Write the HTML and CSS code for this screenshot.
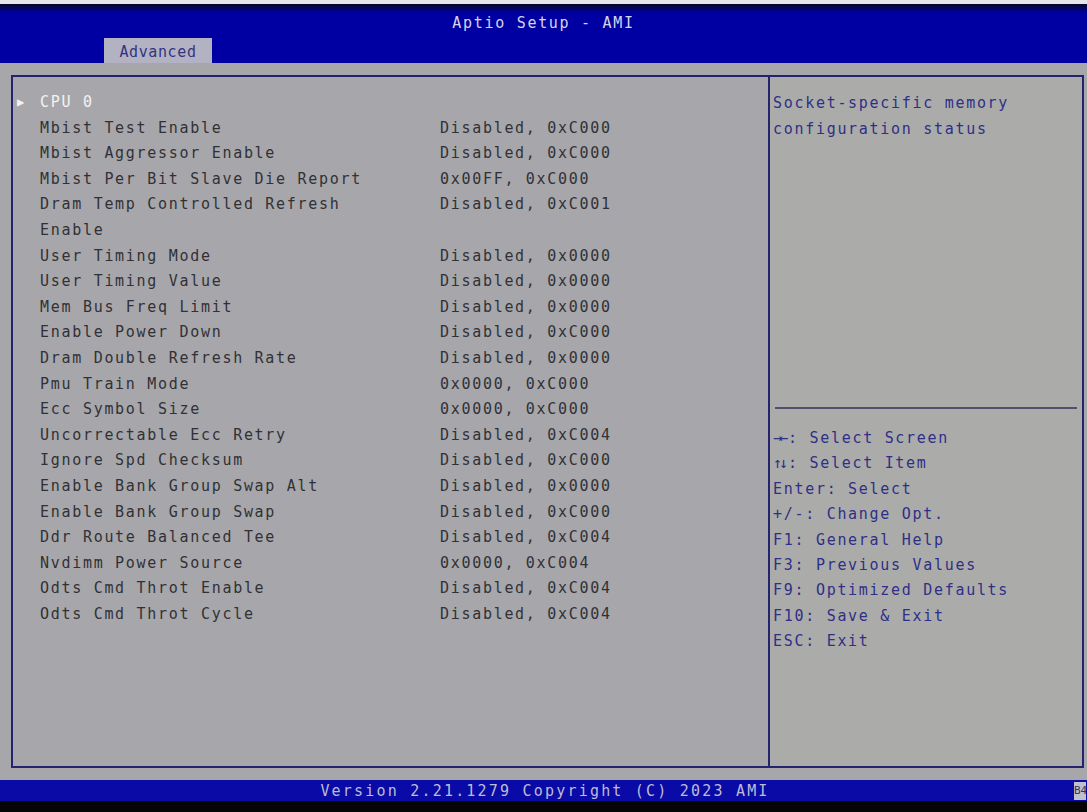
FILE: index.html
```html
<!DOCTYPE html>
<html lang="en">
<head>
  <meta charset="UTF-8" />
  <title>Aptio Setup - AMI</title>
  <link rel="stylesheet" href="styles.css">
</head>
<body>
  <header class="topbar">
    <div class="title">Aptio Setup - AMI</div>
    <nav class="tabs">
      <span class="tab">Advanced</span>
    </nav>
  </header>

  <main class="main">
    <div class="frame">
      <section class="settings">
        <div class="row submenu"><span class="arrow">&#9654;</span><span class="label">CPU 0</span><span class="value"></span></div>
        <div class="row"><span class="label">Mbist Test Enable</span><span class="value">Disabled, 0xC000</span></div>
        <div class="row"><span class="label">Mbist Aggressor Enable</span><span class="value">Disabled, 0xC000</span></div>
        <div class="row"><span class="label">Mbist Per Bit Slave Die Report</span><span class="value">0x00FF, 0xC000</span></div>
        <div class="row"><span class="label">Dram Temp Controlled Refresh Enable</span><span class="value">Disabled, 0xC001</span></div>
        <div class="row"><span class="label">User Timing Mode</span><span class="value">Disabled, 0x0000</span></div>
        <div class="row"><span class="label">User Timing Value</span><span class="value">Disabled, 0x0000</span></div>
        <div class="row"><span class="label">Mem Bus Freq Limit</span><span class="value">Disabled, 0x0000</span></div>
        <div class="row"><span class="label">Enable Power Down</span><span class="value">Disabled, 0xC000</span></div>
        <div class="row"><span class="label">Dram Double Refresh Rate</span><span class="value">Disabled, 0x0000</span></div>
        <div class="row"><span class="label">Pmu Train Mode</span><span class="value">0x0000, 0xC000</span></div>
        <div class="row"><span class="label">Ecc Symbol Size</span><span class="value">0x0000, 0xC000</span></div>
        <div class="row"><span class="label">Uncorrectable Ecc Retry</span><span class="value">Disabled, 0xC004</span></div>
        <div class="row"><span class="label">Ignore Spd Checksum</span><span class="value">Disabled, 0xC000</span></div>
        <div class="row"><span class="label">Enable Bank Group Swap Alt</span><span class="value">Disabled, 0x0000</span></div>
        <div class="row"><span class="label">Enable Bank Group Swap</span><span class="value">Disabled, 0xC000</span></div>
        <div class="row"><span class="label">Ddr Route Balanced Tee</span><span class="value">Disabled, 0xC004</span></div>
        <div class="row"><span class="label">Nvdimm Power Source</span><span class="value">0x0000, 0xC004</span></div>
        <div class="row"><span class="label">Odts Cmd Throt Enable</span><span class="value">Disabled, 0xC004</span></div>
        <div class="row"><span class="label">Odts Cmd Throt Cycle</span><span class="value">Disabled, 0xC004</span></div>
      </section>

      <aside class="side">
        <div class="help">Socket-specific memory configuration status</div>
        <hr class="divider">
        <ul class="keys">
          <li><span class="key">&rarr;&larr;</span>: Select Screen</li>
          <li><span class="key">&uarr;&darr;</span>: Select Item</li>
          <li>Enter: Select</li>
          <li>+/-: Change Opt.</li>
          <li>F1: General Help</li>
          <li>F3: Previous Values</li>
          <li>F9: Optimized Defaults</li>
          <li>F10: Save &amp; Exit</li>
          <li>ESC: Exit</li>
        </ul>
      </aside>
    </div>
  </main>

  <footer class="footer">
    <div class="version">Version 2.21.1279 Copyright (C) 2023 AMI</div>
    <span class="code">B4</span>
  </footer>
</body>
</html>
```

FILE: styles.css
```css
body {
  margin: 0;
  height: 812px;
  background: #a7a7ab;
  font-family: "DejaVu Sans Mono", "Liberation Mono", monospace;
  font-size: 15px;
  letter-spacing: 1.7px;
  overflow: hidden;
}

.topbar {
  height: 59px;
  border-top: 4px solid #e6e6ea;
  background: linear-gradient(#06062a 0, #0000a2 9px, #0000a2 100%);
  display: flex;
  flex-direction: column;
}

.title {
  margin-top: 9px;
  line-height: 20px;
  text-align: center;
  color: #d4d4ec;
}

.tabs {
  margin-top: 5px;
  padding-left: 104px;
  display: flex;
}

.tab {
  width: 108px;
  height: 25px;
  line-height: 29px;
  text-align: center;
  background: #b2b2c2;
  color: #34347e;
  letter-spacing: 0.6px;
}

.main {
  padding: 12px 3px 12px 11px;
}

.frame {
  height: 693px;
  box-sizing: border-box;
  border: 2px solid #24246e;
  display: grid;
  grid-template-columns: 755px 1fr;
}

.settings {
  padding: 13px 0 0 4px;
  color: #313135;
}

.row {
  display: grid;
  grid-template-columns: 23px 400px 1fr;
  line-height: 25.6px;
}

.row .label {
  grid-column: 2;
  max-width: 345px;
}

.row .value {
  grid-column: 3;
}

.submenu {
  color: #f2f2f2;
}

.arrow {
  grid-column: 1;
  font-size: 12px;
  letter-spacing: 0;
}

.side {
  border-left: 2px solid #24246e;
  background: #abaca9;
  color: #2f2f88;
  display: flex;
  flex-direction: column;
}

.help {
  height: 316px;
  padding: 14px 8px 0 3px;
  line-height: 25.5px;
}

.divider {
  margin: 0 5px;
  border: none;
  border-top: 2px solid #4e4e6e;
}

.keys {
  list-style: none;
  margin: 0;
  padding: 17px 0 0 3px;
  line-height: 25.4px;
}

.key {
  letter-spacing: -3px;
  margin-right: 3px;
}

.footer {
  height: 21px;
  border-bottom: 11px solid #050508;
  background: #0a0aa6;
  display: flex;
  align-items: center;
}

.version {
  flex: 1;
  text-align: center;
  color: #bcbcd6;
  letter-spacing: 2.2px;
  padding-left: 16px;
}

.code {
  width: 12px;
  height: 18px;
  margin-right: 1px;
  background: #c0c0cc;
  color: #30305a;
  font-size: 11px;
  letter-spacing: 0;
  line-height: 18px;
  text-align: center;
  overflow: hidden;
}
```
